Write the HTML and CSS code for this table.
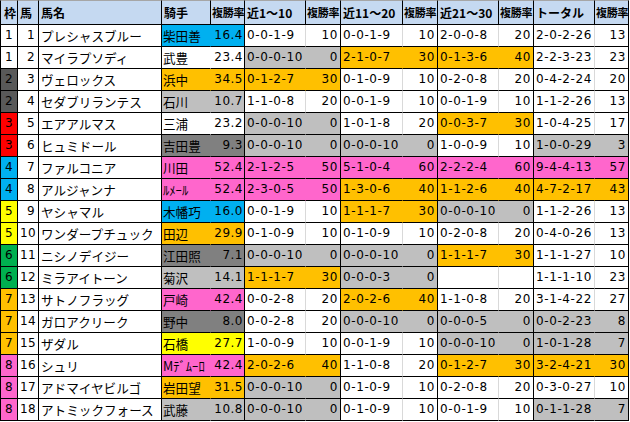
FILE: index.html
```html
<!DOCTYPE html>
<html lang="ja">
<head>
<meta charset="utf-8">
<title>出走表</title>
<link rel="stylesheet" href="styles.css">
</head>
<body>
<div class="sheet">
  <div class="row head">
    <div class="h hf">枠</div><div class="h">馬</div><div class="h">馬名</div><div class="h">騎手</div><div class="h hr">複勝率</div>
    <div class="h">近1～10</div><div class="h hr">複勝率</div><div class="h">近11～20</div><div class="h hr">複勝率</div>
    <div class="h">近21～30</div><div class="h hr">複勝率</div><div class="h">トータル</div><div class="h hr">複勝率</div>
  </div>

  <div class="row">
    <div class="f">1</div><div class="n">1</div><div class="nm">プレシャスブルー</div><div class="jk c">柴田善</div><div class="jr c">16.4</div>
    <div class="rc">0-0-1-9</div><div class="rt">10</div><div class="rc">0-0-1-9</div><div class="rt">10</div>
    <div class="rc">2-0-0-8</div><div class="rt">20</div><div class="rc">2-0-2-26</div><div class="rt">13</div>
  </div>
  <div class="row">
    <div class="f">1</div><div class="n">2</div><div class="nm">マイラプソディ</div><div class="jk">武豊</div><div class="jr">23.4</div>
    <div class="rc g">0-0-0-10</div><div class="rt g">0</div><div class="rc o">2-1-0-7</div><div class="rt o">30</div>
    <div class="rc o">0-1-3-6</div><div class="rt o">40</div><div class="rc">2-2-3-23</div><div class="rt">23</div>
  </div>
  <div class="row">
    <div class="f w2">2</div><div class="n">3</div><div class="nm">ヴェロックス</div><div class="jk o">浜中</div><div class="jr o">34.5</div>
    <div class="rc o">0-1-2-7</div><div class="rt o">30</div><div class="rc">0-1-0-9</div><div class="rt">10</div>
    <div class="rc">0-2-0-8</div><div class="rt">20</div><div class="rc">0-4-2-24</div><div class="rt">20</div>
  </div>
  <div class="row">
    <div class="f w2">2</div><div class="n">4</div><div class="nm">セダブリランテス</div><div class="jk g">石川</div><div class="jr g">10.7</div>
    <div class="rc">1-1-0-8</div><div class="rt">20</div><div class="rc">0-0-1-9</div><div class="rt">10</div>
    <div class="rc">0-0-1-9</div><div class="rt">10</div><div class="rc">1-1-2-26</div><div class="rt">13</div>
  </div>
  <div class="row">
    <div class="f w3">3</div><div class="n">5</div><div class="nm">エアアルマス</div><div class="jk">三浦</div><div class="jr">23.2</div>
    <div class="rc g">0-0-0-10</div><div class="rt g">0</div><div class="rc">1-0-1-8</div><div class="rt">20</div>
    <div class="rc o">0-0-3-7</div><div class="rt o">30</div><div class="rc">1-0-4-25</div><div class="rt">17</div>
  </div>
  <div class="row">
    <div class="f w3">3</div><div class="n">6</div><div class="nm">ヒュミドール</div><div class="jk d">吉田豊</div><div class="jr d">9.3</div>
    <div class="rc g">0-0-0-10</div><div class="rt g">0</div><div class="rc g">0-0-0-10</div><div class="rt g">0</div>
    <div class="rc">1-0-0-9</div><div class="rt">10</div><div class="rc g">1-0-0-29</div><div class="rt g">3</div>
  </div>
  <div class="row">
    <div class="f w4">4</div><div class="n">7</div><div class="nm">ファルコニア</div><div class="jk p">川田</div><div class="jr p">52.4</div>
    <div class="rc p">2-1-2-5</div><div class="rt p">50</div><div class="rc p">5-1-0-4</div><div class="rt p">60</div>
    <div class="rc p">2-2-2-4</div><div class="rt p">60</div><div class="rc p">9-4-4-13</div><div class="rt p">57</div>
  </div>
  <div class="row">
    <div class="f w4">4</div><div class="n">8</div><div class="nm">アルジャンナ</div><div class="jk p">ﾙﾒｰﾙ</div><div class="jr p">52.4</div>
    <div class="rc p">2-3-0-5</div><div class="rt p">50</div><div class="rc o">1-3-0-6</div><div class="rt o">40</div>
    <div class="rc o">1-1-2-6</div><div class="rt o">40</div><div class="rc o">4-7-2-17</div><div class="rt o">43</div>
  </div>
  <div class="row">
    <div class="f w5">5</div><div class="n">9</div><div class="nm">ヤシャマル</div><div class="jk c">木幡巧</div><div class="jr c">16.0</div>
    <div class="rc">0-0-1-9</div><div class="rt">10</div><div class="rc o">1-1-1-7</div><div class="rt o">30</div>
    <div class="rc g">0-0-0-10</div><div class="rt g">0</div><div class="rc">1-1-2-26</div><div class="rt">13</div>
  </div>
  <div class="row">
    <div class="f w5">5</div><div class="n">10</div><div class="nm">ワンダープチュック</div><div class="jk o">田辺</div><div class="jr o">29.9</div>
    <div class="rc">0-1-0-9</div><div class="rt">10</div><div class="rc">0-1-0-9</div><div class="rt">10</div>
    <div class="rc">0-2-0-8</div><div class="rt">20</div><div class="rc">0-4-0-26</div><div class="rt">13</div>
  </div>
  <div class="row">
    <div class="f w6">6</div><div class="n">11</div><div class="nm">ニシノデイジー</div><div class="jk d">江田照</div><div class="jr d">7.1</div>
    <div class="rc g">0-0-0-10</div><div class="rt g">0</div><div class="rc g">0-0-0-10</div><div class="rt g">0</div>
    <div class="rc o">1-1-1-7</div><div class="rt o">30</div><div class="rc">1-1-1-27</div><div class="rt">10</div>
  </div>
  <div class="row">
    <div class="f w6">6</div><div class="n">12</div><div class="nm">ミラアイトーン</div><div class="jk g">菊沢</div><div class="jr g">14.1</div>
    <div class="rc o">1-1-1-7</div><div class="rt o">30</div><div class="rc g">0-0-0-3</div><div class="rt g">0</div>
    <div class="rc"></div><div class="rt"></div><div class="rc">1-1-1-10</div><div class="rt">23</div>
  </div>
  <div class="row">
    <div class="f w7">7</div><div class="n">13</div><div class="nm">サトノフラッグ</div><div class="jk p">戸崎</div><div class="jr p">42.4</div>
    <div class="rc">0-0-2-8</div><div class="rt">20</div><div class="rc o">2-0-2-6</div><div class="rt o">40</div>
    <div class="rc">1-1-0-8</div><div class="rt">20</div><div class="rc">3-1-4-22</div><div class="rt">27</div>
  </div>
  <div class="row">
    <div class="f w7">7</div><div class="n">14</div><div class="nm">ガロアクリーク</div><div class="jk d">野中</div><div class="jr d">8.0</div>
    <div class="rc">0-0-2-8</div><div class="rt">20</div><div class="rc g">0-0-0-10</div><div class="rt g">0</div>
    <div class="rc g">0-0-0-5</div><div class="rt g">0</div><div class="rc g">0-0-2-23</div><div class="rt g">8</div>
  </div>
  <div class="row">
    <div class="f w7">7</div><div class="n">15</div><div class="nm">ザダル</div><div class="jk y">石橋</div><div class="jr y">27.7</div>
    <div class="rc">1-0-0-9</div><div class="rt">10</div><div class="rc">0-0-1-9</div><div class="rt">10</div>
    <div class="rc g">0-0-0-10</div><div class="rt g">0</div><div class="rc g">1-0-1-28</div><div class="rt g">7</div>
  </div>
  <div class="row">
    <div class="f w8">8</div><div class="n">16</div><div class="nm">シュリ</div><div class="jk p">Mﾃﾞﾑｰﾛ</div><div class="jr p">42.4</div>
    <div class="rc o">2-0-2-6</div><div class="rt o">40</div><div class="rc">1-1-0-8</div><div class="rt">20</div>
    <div class="rc o">0-1-2-7</div><div class="rt o">30</div><div class="rc o">3-2-4-21</div><div class="rt o">30</div>
  </div>
  <div class="row">
    <div class="f w8">8</div><div class="n">17</div><div class="nm">アドマイヤビルゴ</div><div class="jk o">岩田望</div><div class="jr o">31.5</div>
    <div class="rc g">0-0-0-10</div><div class="rt g">0</div><div class="rc">0-1-0-9</div><div class="rt">10</div>
    <div class="rc">0-2-0-8</div><div class="rt">20</div><div class="rc">0-3-0-27</div><div class="rt">10</div>
  </div>
  <div class="row">
    <div class="f w8">8</div><div class="n">18</div><div class="nm">アトミックフォース</div><div class="jk g">武藤</div><div class="jr g">10.8</div>
    <div class="rc g">0-0-0-10</div><div class="rt g">0</div><div class="rc">0-1-0-9</div><div class="rt">10</div>
    <div class="rc">0-0-1-9</div><div class="rt">10</div><div class="rc g">0-1-1-28</div><div class="rt g">7</div>
  </div>
</div>
</body>
</html>
```
FILE: styles.css
```css
* { box-sizing: border-box; }
html, body { margin: 0; padding: 0; background: #fff; }
body {
  font-family: "DejaVu Sans", "Noto Sans CJK JP", sans-serif;
  color: #000;
}
.sheet {
  display: grid;
  grid-template-columns: 18px 21px 123px 49px 34px 61px 35px 62px 35px 61px 35px 61px 34px;
  grid-template-rows: 25px repeat(18, 22px);
  width: 629px;
}
.row { display: contents; }
.sheet .row > div {
  border-right: 1px solid #000;
  border-bottom: 1px solid #000;
  background: var(--c, #fff);
  white-space: nowrap;
  overflow: hidden;
  line-height: 21px;
  font-size: 12px;
  letter-spacing: 0.6px;
  padding: 0 2px;
}
.sheet .head > div {
  background: #c5d9f1;
  border-top: 1px solid #a6a6a6;
  border-right: 1px solid #000;
  line-height: 23px;
  font-weight: bold;
  font-family: "Noto Sans CJK JP", sans-serif;
  font-size: 12px;
  letter-spacing: 0;
  padding: 0 2px;
}
.sheet .head > .hf { border-left: 1px solid #000; padding-left: 3px; }
.sheet .head > .hr { font-size: 11px; padding: 0 0 0 1px; letter-spacing: -0.3px; }

.sheet .row > .f { border-left: 1px solid #000; text-align: center; padding: 0; }
.sheet .row > .n { text-align: right; padding-right: 3px; letter-spacing: 0.3px; }
.sheet .row > .nm {
  font-family: "Noto Sans CJK JP", sans-serif;
  font-size: 12.6px;
  letter-spacing: 0;
  padding-left: 2px;
}
.sheet .row > .jk {
  font-family: "Noto Sans CJK JP", sans-serif;
  font-size: 12.6px;
  letter-spacing: 0;
  padding-left: 1px;
  border-right-color: var(--c, #fff);
  overflow: visible;
}
.sheet .row > .jr { text-align: right; padding-right: 1px; letter-spacing: 0.5px; }
.sheet .row > .rc { border-right-color: var(--c, #d9d9d9); padding-left: 2px; }
.sheet .row > .rt { text-align: right; padding-right: 2px; }

/* cell fills */
.c { --c: #00b0f0; }
.o { --c: #ffc000; }
.g { --c: #bfbfbf; }
.d { --c: #808080; }
.p { --c: #ff66cc; }
.y { --c: #ffff00; }

/* frame colours */
.w2 { --c: #595959; }
.w3 { --c: #ff0000; }
.w4 { --c: #00b0f0; }
.w5 { --c: #ffff00; }
.w6 { --c: #00b050; }
.w7 { --c: #ffc000; }
.w8 { --c: #ff66cc; }
```
